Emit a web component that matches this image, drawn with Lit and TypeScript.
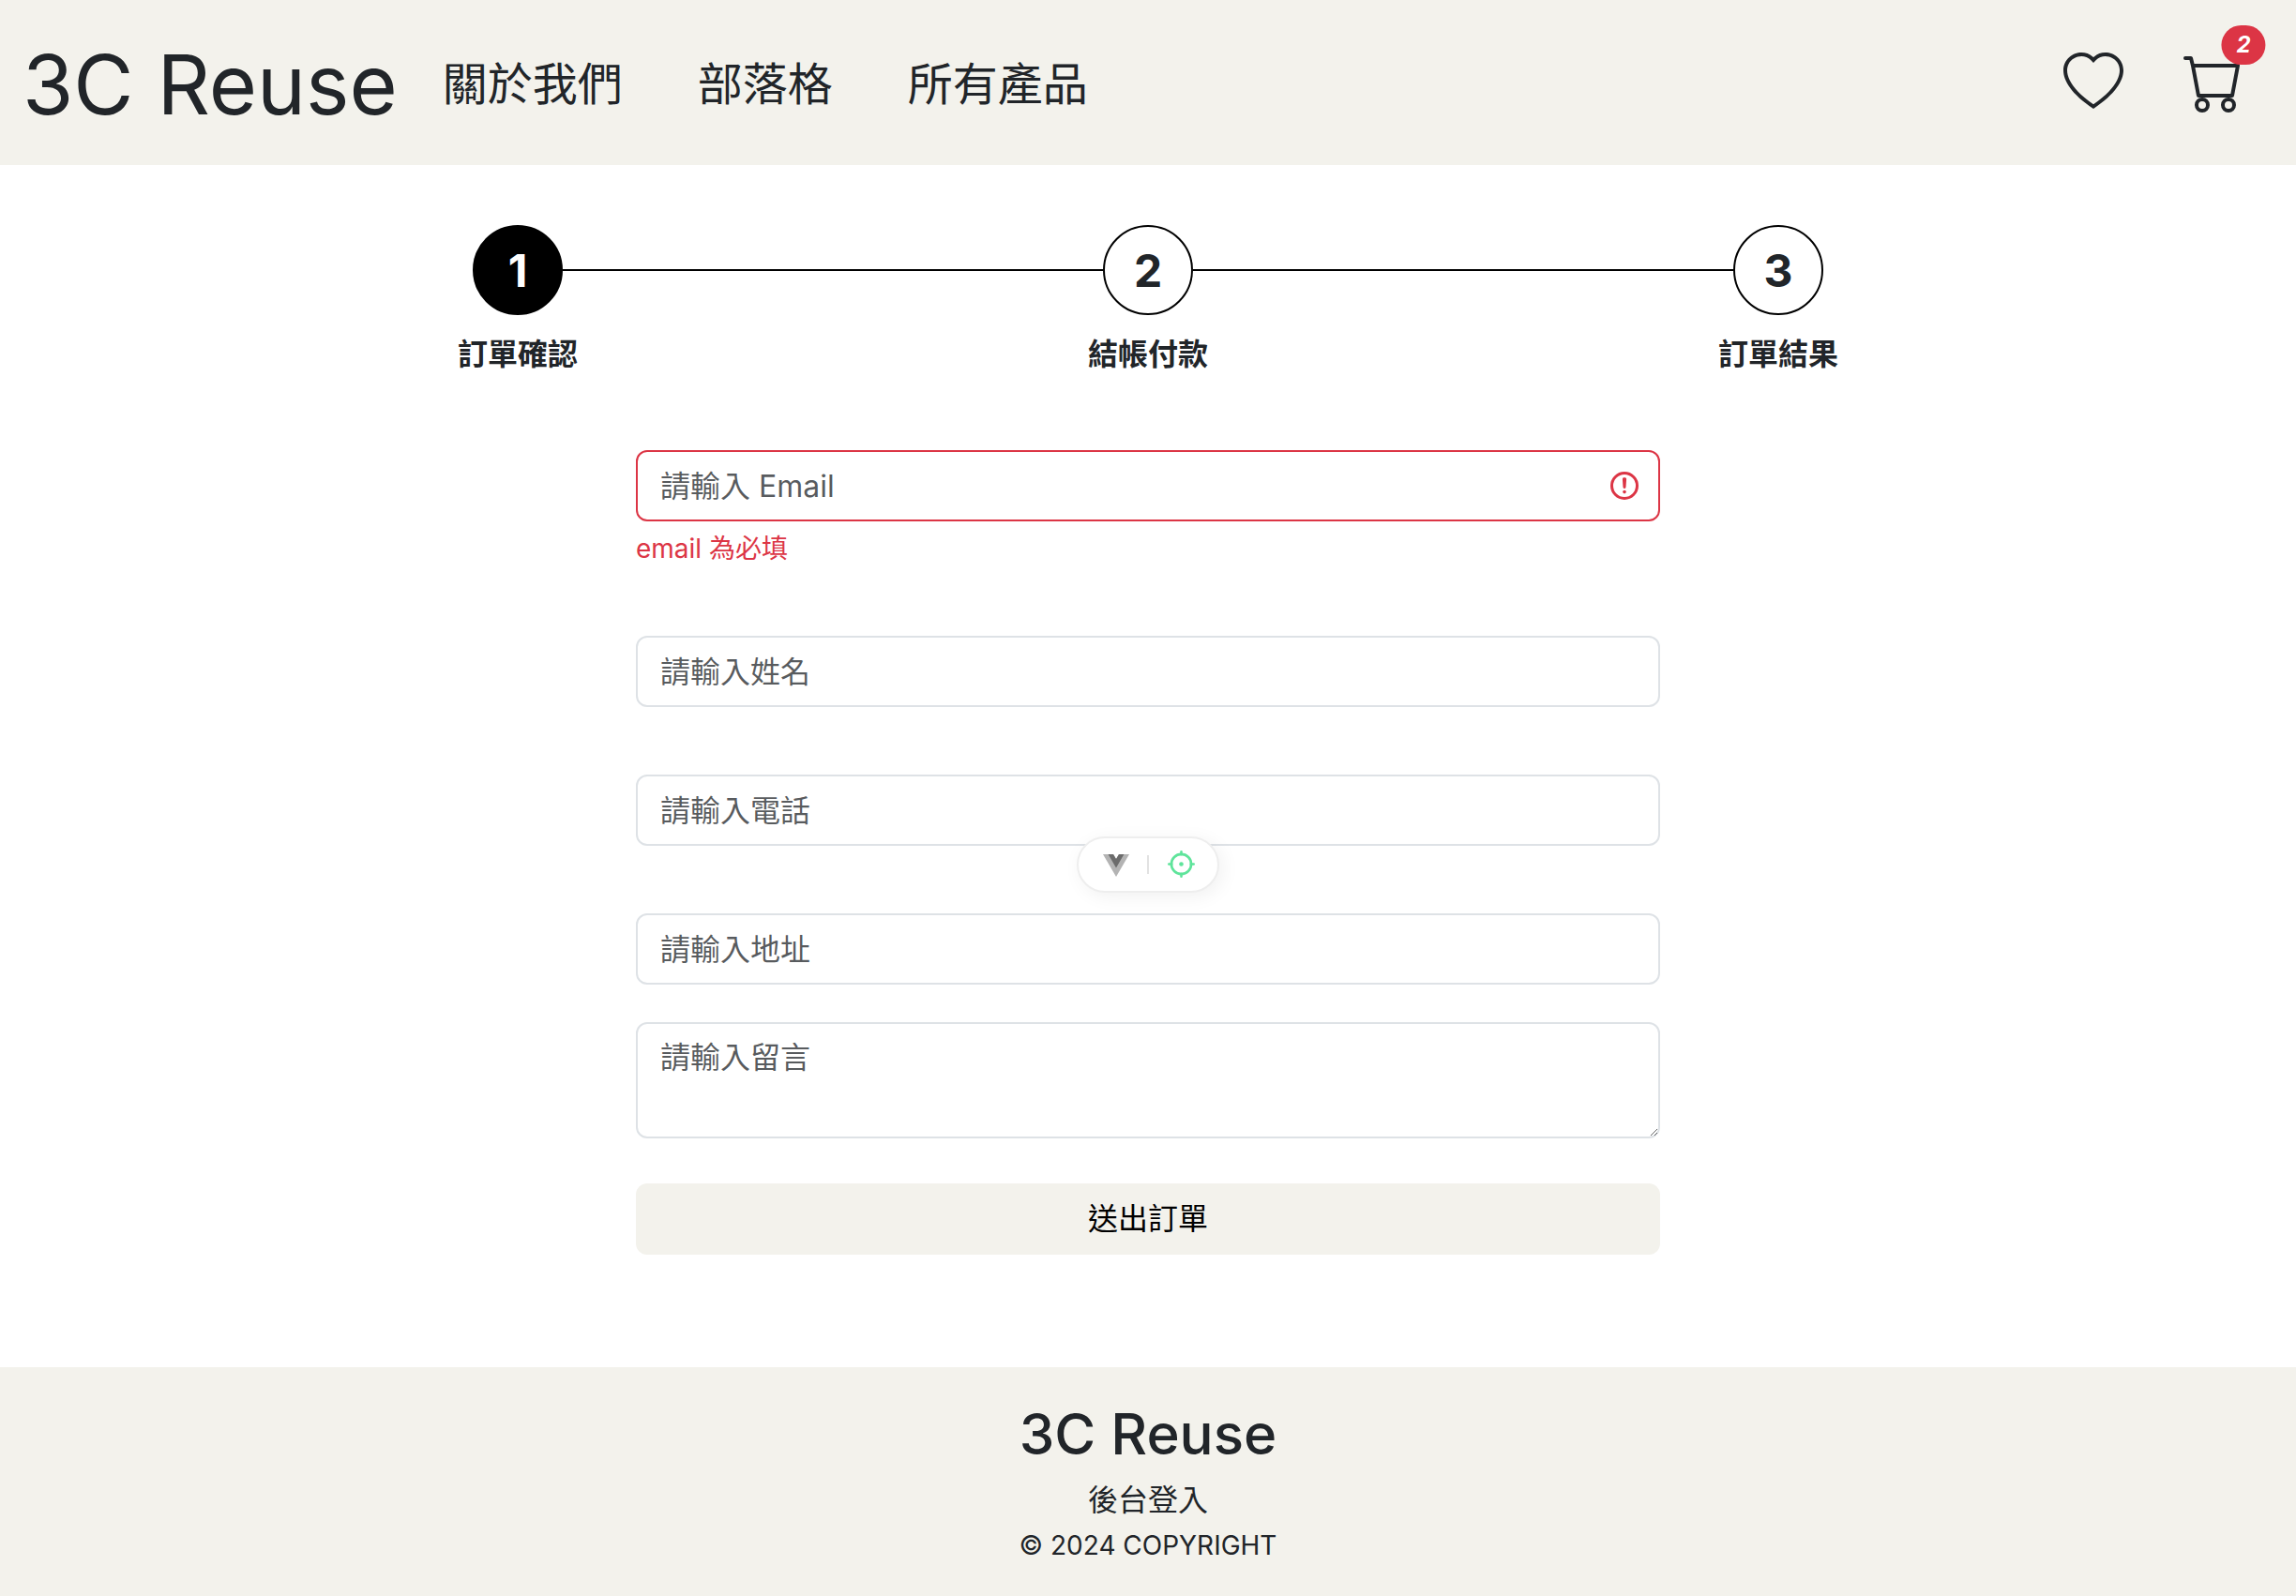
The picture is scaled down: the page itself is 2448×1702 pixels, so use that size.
import { LitElement, html, css, svg, nothing } from "lit";
import { customElement, property } from "lit/decorators.js";
import { classMap } from "lit/directives/class-map.js";

interface Step {
  number: number;
  label: string;
}

interface Field {
  id: string;
  type: string;
  placeholder: string;
  error?: string;
}

const NAV_LINKS = ["關於我們", "部落格", "所有產品"];

const STEPS: Step[] = [
  { number: 1, label: "訂單確認" },
  { number: 2, label: "結帳付款" },
  { number: 3, label: "訂單結果" },
];

const FIELDS: Field[] = [
  { id: "email", type: "email", placeholder: "請輸入 Email", error: "email 為必填" },
  { id: "name", type: "text", placeholder: "請輸入姓名" },
  { id: "tel", type: "tel", placeholder: "請輸入電話" },
  { id: "address", type: "text", placeholder: "請輸入地址" },
];

const heartIcon = svg`<path d="m8 2.748-.717-.737C5.6.281 2.514.878 1.4 3.053c-.523 1.023-.641 2.5.314 4.385.92 1.815 2.834 3.989 6.286 6.357 3.452-2.368 5.365-4.542 6.286-6.357.955-1.886.838-3.362.314-4.385C13.486.878 10.4.28 8.717 2.01L8 2.748zM8 15C-7.333 4.868 3.279-3.04 7.824 1.143c.06.055.119.112.176.171a3.12 3.12 0 0 1 .176-.17C12.72-3.042 23.333 4.867 8 15z"/>`;

const cartIcon = svg`<path d="M0 1.5A.5.5 0 0 1 .5 1H2a.5.5 0 0 1 .485.379L2.89 3H14.5a.5.5 0 0 1 .491.592l-1.5 8A.5.5 0 0 1 13 12H4a.5.5 0 0 1-.491-.408L2.01 3.607 1.61 2H.5a.5.5 0 0 1-.5-.5zM3.102 4l1.313 7h8.17l1.313-7H3.102zM5 12a2 2 0 1 0 0 4 2 2 0 0 0 0-4zm7 0a2 2 0 1 0 0 4 2 2 0 0 0 0-4zm-7 1a1 1 0 1 1 0 2 1 1 0 0 1 0-2zm7 0a1 1 0 1 1 0 2 1 1 0 0 1 0-2z"/>`;

@customElement("site-header")
export class SiteHeader extends LitElement {
  @property({ type: Number }) cartCount = 0;

  static styles = css`
    :host {
      display: block;
      background: #f3f2ec;
    }
    .bar {
      display: flex;
      align-items: center;
      padding: 16px 56px 16px 24px;
    }
    a {
      color: inherit;
      text-decoration: none;
    }
    .brand,
    .links {
      padding-top: 4px;
      white-space: nowrap;
    }
    .brand {
      font-size: 88px;
      line-height: 140px;
      margin-right: 48px;
    }
    .links {
      display: flex;
      gap: 80px;
      flex: 1;
      font-size: 48px;
      line-height: 72px;
    }
    .actions {
      display: flex;
      gap: 64px;
    }
    .action {
      position: relative;
      display: block;
      width: 64px;
      height: 64px;
    }
    .icon {
      display: block;
      width: 64px;
      height: 64px;
      fill: currentColor;
    }
    .badge {
      position: absolute;
      left: 100%;
      top: -8px;
      transform: translate(-50%, -50%);
      padding: 9px 16px;
      border-radius: 24px;
      background: #dc3545;
      color: #fff;
      font-size: 24px;
      font-weight: 700;
      font-style: italic;
      line-height: 24px;
    }
  `;

  render() {
    return html`
      <header class="bar">
        <a class="brand" href="#/">3C Reuse</a>
        <nav class="links">
          ${NAV_LINKS.map((label) => html`<a href="#/">${label}</a>`)}
        </nav>
        <div class="actions">
          <a class="action" href="#/wishlist">
            <svg class="icon" viewBox="0 0 16 16" aria-hidden="true">${heartIcon}</svg>
          </a>
          <a class="action" href="#/cart">
            <svg class="icon" viewBox="0 0 16 16" aria-hidden="true">${cartIcon}</svg>
            <span class="badge">${this.cartCount}</span>
          </a>
        </div>
      </header>
    `;
  }
}

@customElement("step-progress")
export class StepProgress extends LitElement {
  @property({ type: Number }) current = 1;

  static styles = css`
    :host {
      display: block;
    }
    .steps {
      display: flex;
      margin: 0;
      padding: 0;
      list-style: none;
    }
    .step {
      flex: 1;
      text-align: center;
      font-weight: 700;
    }
    .track {
      display: flex;
      align-items: center;
    }
    .line {
      flex: 1;
      height: 2px;
      background: #000;
    }
    .line.hidden {
      background: none;
    }
    .circle {
      box-sizing: border-box;
      width: 96px;
      height: 96px;
      border: 2px solid #000;
      border-radius: 50%;
      font-size: 48px;
      line-height: 94px;
    }
    .circle.active {
      background: #000;
      color: #fff;
    }
    .label {
      margin-top: 18px;
      font-size: 32px;
      line-height: 48px;
    }
  `;

  render() {
    const last = STEPS.length - 1;
    return html`
      <ol class="steps">
        ${STEPS.map(
          (step, i) => html`
            <li class="step">
              <div class="track">
                <span class=${classMap({ line: true, hidden: i === 0 })}></span>
                <span class=${classMap({ circle: true, active: step.number === this.current })}>${step.number}</span>
                <span class=${classMap({ line: true, hidden: i === last })}></span>
              </div>
              <div class="label">${step.label}</div>
            </li>
          `
        )}
      </ol>
    `;
  }
}

@customElement("order-form")
export class OrderForm extends LitElement {
  static styles = css`
    :host {
      display: block;
    }
    .field {
      margin-bottom: 72px;
    }
    .field.last {
      margin-bottom: 40px;
    }
    .control {
      position: relative;
    }
    .input {
      display: block;
      box-sizing: border-box;
      width: 100%;
      margin: 0;
      padding: 12px 24px;
      border: 2px solid #dee2e6;
      border-radius: 12px;
      background: #fff;
      color: #212529;
      font-family: inherit;
      font-size: 32px;
      line-height: 48px;
      outline: none;
    }
    input.input {
      height: 76px;
    }
    textarea.input {
      resize: vertical;
    }
    .input::placeholder {
      color: rgba(33, 37, 41, 0.75);
      opacity: 1;
    }
    .input.invalid {
      padding-right: 72px;
      border-color: #dc3545;
    }
    .alert {
      position: absolute;
      right: 20px;
      top: 20px;
      width: 36px;
      height: 36px;
    }
    .error {
      margin-top: 8px;
      color: #dc3545;
      font-size: 28px;
      line-height: 42px;
    }
    .submit {
      display: block;
      width: 100%;
      margin: 48px 0 0;
      padding: 14px 24px;
      border: 0;
      border-radius: 12px;
      background: #f3f2ec;
      color: #000;
      font-family: inherit;
      font-size: 32px;
      line-height: 48px;
    }
  `;

  private renderField(field: Field, last: boolean) {
    const invalid = Boolean(field.error);
    return html`
      <div class=${classMap({ field: true, last })}>
        <div class="control">
          <input
            class=${classMap({ input: true, invalid })}
            id=${field.id}
            name=${field.id}
            type=${field.type}
            placeholder=${field.placeholder}
            aria-label=${field.placeholder}
          />
          ${invalid
            ? html`<svg class="alert" viewBox="0 0 12 12" fill="none" stroke="#dc3545" aria-hidden="true">
                <circle cx="6" cy="6" r="4.5" />
                <path stroke-linejoin="round" d="M5.8 3.6h.4L6 6.5z" />
                <circle cx="6" cy="8.2" r=".6" fill="#dc3545" stroke="none" />
              </svg>`
            : nothing}
        </div>
        ${invalid ? html`<div class="error">${field.error}</div>` : nothing}
      </div>
    `;
  }

  render() {
    return html`
      <form novalidate>
        ${FIELDS.map((field, i) => this.renderField(field, i === FIELDS.length - 1))}
        <textarea class="input" id="message" name="message" rows="2" placeholder="請輸入留言" aria-label="請輸入留言"></textarea>
        <button class="submit" type="button">送出訂單</button>
      </form>
    `;
  }
}

@customElement("inspector-pill")
export class InspectorPill extends LitElement {
  static styles = css`
    :host {
      display: flex;
      align-items: center;
      justify-content: center;
      gap: 18px;
      box-sizing: border-box;
      width: 152px;
      height: 60px;
      border: 2px solid #eee;
      border-radius: 30px;
      background: #fff;
      box-shadow: 4px 4px 20px rgba(0, 0, 0, 0.06);
    }
    .tool {
      display: block;
      padding: 0;
      border: 0;
      background: none;
    }
    .glyph {
      display: block;
      width: 32px;
      height: 32px;
    }
    .divider {
      width: 2px;
      height: 20px;
      background: #e2e2e2;
    }
  `;

  render() {
    return html`
      <button class="tool" type="button">
        <svg class="glyph" viewBox="0 0 32 32" aria-hidden="true">
          <path fill="#b3b3b3" d="M3 5h11l3 5 3-5h11L17 29z" />
          <path fill="#6b6b6b" d="M8.6 5H14l3 5 3-5h5.4L17 19.5z" />
        </svg>
      </button>
      <span class="divider"></span>
      <button class="tool" type="button">
        <svg class="glyph" viewBox="0 0 32 32" fill="none" stroke="#5fe49b" stroke-width="2.6" stroke-linecap="round" aria-hidden="true">
          <circle cx="16.5" cy="15.5" r="10.6" />
          <path d="M16.5 2.3v3M16.5 25.7v3M3.3 15.5h3M26.700 15.5h3" />
          <circle cx="16.5" cy="15.5" r="2.3" fill="#5fe49b" stroke="none" />
        </svg>
      </button>
    `;
  }
}

@customElement("site-footer")
export class SiteFooter extends LitElement {
  static styles = css`
    :host {
      display: block;
      background: #f3f2ec;
      text-align: center;
    }
    .footer {
      padding: 32px 24px 28px;
      font-size: 32px;
      line-height: 48px;
    }
    .title {
      margin: 0 0 8px;
      font-size: 60px;
      font-weight: 500;
      line-height: 78px;
    }
    .login {
      display: block;
      color: inherit;
      text-decoration: none;
    }
    .copyright {
      margin: 0;
      font-size: 28px;
    }
  `;

  render() {
    return html`
      <footer class="footer">
        <h2 class="title">3C Reuse</h2>
        <a class="login" href="#/login">後台登入</a>
        <p class="copyright">© 2024 COPYRIGHT</p>
      </footer>
    `;
  }
}

@customElement("app-root")
export class AppRoot extends LitElement {
  static styles = css`
    :host {
      display: flex;
      flex-direction: column;
      min-height: 100vh;
      background: #fff;
      color: #212529;
      font-family: Inter, "Noto Sans CJK TC", sans-serif;
    }
    .main {
      position: relative;
      padding: 64px 24px 120px;
    }
    .steps {
      max-width: 2016px;
      margin: 0 auto 78px;
    }
    .form {
      max-width: 1092px;
      margin: 0 auto;
    }
    .inspector {
      position: absolute;
      left: 50%;
      top: 716px;
      transform: translateX(-50%);
    }
    .footer {
      flex: 1;
    }
  `;

  render() {
    return html`
      <site-header .cartCount=${2}></site-header>
      <main class="main">
        <step-progress class="steps" .current=${1}></step-progress>
        <order-form class="form"></order-form>
        <inspector-pill class="inspector"></inspector-pill>
      </main>
      <site-footer class="footer"></site-footer>
    `;
  }
}
